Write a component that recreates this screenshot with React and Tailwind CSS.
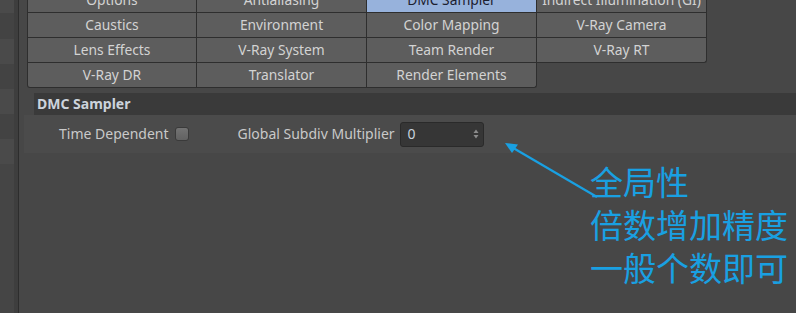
import React from "react";

const rows = [
  ["Options", "Antialiasing", "DMC Sampler", "Indirect Illumination (GI)"],
  ["Caustics", "Environment", "Color Mapping", "V-Ray Camera"],
  ["Lens Effects", "V-Ray System", "Team Render", "V-Ray RT"],
  ["V-Ray DR", "Translator", "Render Elements", null],
];

function Cell({ label, r, c }) {
  if (label === null) return <div />;
  const active = label === "DMC Sampler";
  let cls =
    "h-[25px] border-r border-b border-[#2e2e2e] flex items-center justify-center text-[13.8px] leading-none whitespace-nowrap ";
  if (c === 0) cls += "border-l ";
  if (r === 3 && c === 0) cls += "rounded-bl-[3px] ";
  if (r === 3 && c === 2) cls += "rounded-br-[3px] ";
  if (r === 2 && c === 3) cls += "rounded-br-[3px] ";
  cls += active ? "bg-[#97b2dc] text-[#1c2030]" : "bg-[#5d5d5d] text-[#d3d3d3]";
  return <div className={cls}>{label}</div>;
}

export default function App() {
  const listRows = [
    ["h-[13px]", "bg-[#4a4a4a]"],
    ["h-[26px]", "bg-[#434343]"],
    ["h-[25px]", "bg-[#4a4a4a]"],
    ["h-[25px]", "bg-[#434343]"],
    ["h-[25px]", "bg-[#4a4a4a]"],
    ["h-[25px]", "bg-[#434343]"],
    ["h-[25px]", "bg-[#4a4a4a]"],
  ];
  return (
    <div
      className="relative w-[796px] h-[313px] overflow-hidden flex bg-[#474747]"
      style={{ fontFamily: '"Noto Sans", "Open Sans", sans-serif' }}
    >
      <div className="w-[14px] flex flex-col bg-[#454545]">
        {listRows.map(([h, bg], i) => (
          <div key={i} className={`${h} ${bg}`} />
        ))}
      </div>
      <div className="w-[4px] bg-[#3e3e3e]" />
      <div className="w-px bg-[#2d2d2d]" />
      <div className="flex-1 flex flex-col">
        <div className="pl-[8px] -mt-[12px]">
          <div className="grid grid-cols-[repeat(4,170px)]">
            {rows.map((row, r) =>
              row.map((label, c) => <Cell key={r + "-" + c} label={label} r={r} c={c} />)
            )}
          </div>
        </div>
        <div className="mt-[5px] ml-[15px] h-[22px] bg-[#3a3a3a] flex items-center px-[3px]">
          <span className="text-[14px] font-bold text-[#ccd3dc] leading-none">DMC Sampler</span>
        </div>
        <div className="ml-[5px] h-[38px] bg-[#4b4b4b] flex items-center pl-[35px]">
          <span className="text-[14px] text-[#c9c9c9] leading-none">Time Dependent</span>
          <div className="ml-[6px] w-[14px] h-[14px] rounded-[3px] border border-[#3a3a3a] bg-gradient-to-b from-[#737373] to-[#626262]" />
          <span className="ml-[49px] text-[14px] text-[#c9c9c9] leading-none">Global Subdiv Multiplier</span>
          <div className="ml-[5px] w-[84px] h-[25px] rounded-[3px] border border-[#2a2a2a] bg-[#363636] flex items-center pl-[7px] pr-[4px]">
            <span className="flex-1 text-[14px] text-[#c8d3df] leading-none">0</span>
            <svg width="6" height="10" viewBox="0 0 6 10">
              <path d="M3 0.5 L5.5 4 L0.5 4 Z" fill="#8c8c8c" />
              <path d="M3 9.5 L5.5 6 L0.5 6 Z" fill="#8c8c8c" />
            </svg>
          </div>
        </div>
      </div>

      <svg className="absolute left-0 top-0 pointer-events-none" width="796" height="313">
        <line x1="597" y1="197" x2="509" y2="145.5" stroke="#19a0e2" strokeWidth="2.2" />
        <path d="M505 143 L518 144.5 L512 153 Z" fill="#19a0e2" />
      </svg>
      <div
        className="absolute left-[590px] top-[160px] text-[33px] leading-[43px] text-[#19a0e2]"
        style={{ fontFamily: '"Noto Sans CJK SC", sans-serif' }}
      >
        <div>全局性</div>
        <div>倍数增加精度</div>
        <div>一般个数即可</div>
      </div>
    </div>
  );
}
